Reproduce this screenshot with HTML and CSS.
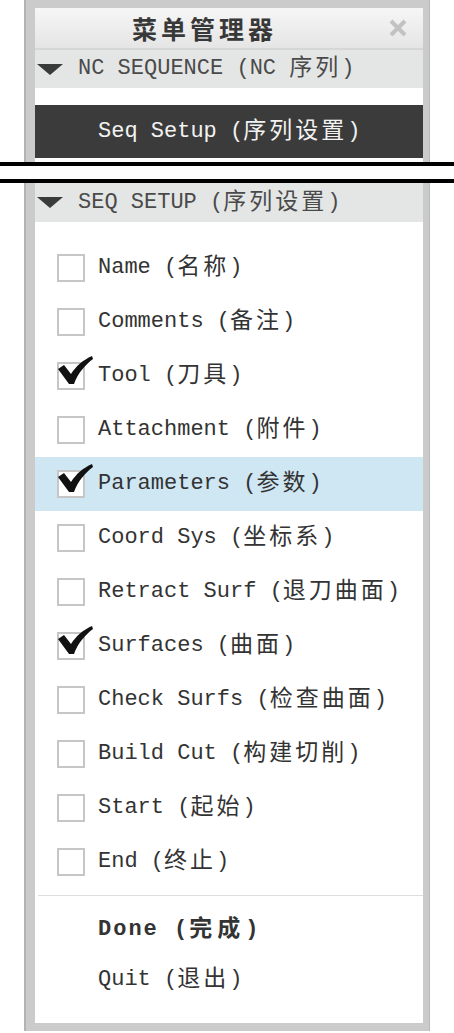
FILE: index.html
```html
<!DOCTYPE html>
<html lang="zh-CN">
<head>
    <meta charset="UTF-8">
    <title>菜单管理器</title>
    <link rel="stylesheet" href="styles.css">
</head>
<body>
    <div class="menu top">
        <div class="titlebar">
            <span class="title">菜单管理器</span>
            <span class="close">
                <svg width="20" height="18" viewBox="0 0 20 18"><path d="M3 2 L17 16 M17 2 L3 16" stroke="#c2c2c2" stroke-width="4"/></svg>
            </span>
        </div>
        <div class="groupHead"><span class="tri"></span>NC SEQUENCE (NC <span class="cn">序列</span>)</div>
        <div class="pane">
            <div class="item current">Seq Setup (<span class="cn">序列设置</span>)</div>
        </div>
    </div>

    <div class="cut"></div>

    <div class="menu bottom">
        <div class="groupHead"><span class="tri"></span>SEQ SETUP (<span class="cn">序列设置</span>)</div>
        <div class="pane list">
            <div class="checkRow"><span class="box"></span>Name (<span class="cn">名称</span>)</div>
            <div class="checkRow"><span class="box"></span>Comments (<span class="cn">备注</span>)</div>
            <div class="checkRow"><span class="box on"><svg width="40" height="34" viewBox="0 0 40 34"><path d="M1 13 L7 9 L14 18 C19 10 26 4 35 0 L36 3 C28 9 21 17 17 28 L12 28 Z" fill="#111"/></svg></span>Tool (<span class="cn">刀具</span>)</div>
            <div class="checkRow"><span class="box"></span>Attachment (<span class="cn">附件</span>)</div>
            <div class="checkRow sel"><span class="box on"><svg width="40" height="34" viewBox="0 0 40 34"><path d="M1 13 L7 9 L14 18 C19 10 26 4 35 0 L36 3 C28 9 21 17 17 28 L12 28 Z" fill="#111"/></svg></span>Parameters (<span class="cn">参数</span>)</div>
            <div class="checkRow"><span class="box"></span>Coord Sys (<span class="cn">坐标系</span>)</div>
            <div class="checkRow"><span class="box"></span>Retract Surf (<span class="cn">退刀曲面</span>)</div>
            <div class="checkRow"><span class="box on"><svg width="40" height="34" viewBox="0 0 40 34"><path d="M1 13 L7 9 L14 18 C19 10 26 4 35 0 L36 3 C28 9 21 17 17 28 L12 28 Z" fill="#111"/></svg></span>Surfaces (<span class="cn">曲面</span>)</div>
            <div class="checkRow"><span class="box"></span>Check Surfs (<span class="cn">检查曲面</span>)</div>
            <div class="checkRow"><span class="box"></span>Build Cut (<span class="cn">构建切削</span>)</div>
            <div class="checkRow"><span class="box"></span>Start (<span class="cn">起始</span>)</div>
            <div class="checkRow"><span class="box"></span>End (<span class="cn">终止</span>)</div>
            <div class="sep"></div>
            <div class="item done">Done (<span class="cn">完成</span>)</div>
            <div class="item">Quit (<span class="cn">退出</span>)</div>
        </div>
    </div>
</body>
</html>
```

FILE: styles.css
```css
body {
    margin: 0;
    background: #fff;
    font-family: "Liberation Mono", "Noto Sans CJK SC", monospace;
    font-size: 22px;
    line-height: 26px;
    color: #333;
}
.menu {
    margin-left: 24px;
    width: 406px;
    box-sizing: border-box;
    background: #cbcbcb;
    border-left: 2px solid #b3b3b3;
    border-right: 1px solid #b8b8b8;
    padding: 0 6px 0 9px;
}
.menu.top {
    padding-top: 8px;
}
.menu.bottom {
    padding-bottom: 8px;
}
.titlebar {
    height: 40px;
    display: flex;
    align-items: center;
    background: linear-gradient(#f6f6f6, #e5e5e5);
    border-bottom: 2px solid #d6d6d6;
}
.title {
    flex: 1;
    text-align: center;
    padding-right: 14px;
    font-family: "Noto Sans CJK SC", sans-serif;
    font-weight: bold;
    font-size: 25px;
    letter-spacing: 4px;
    color: #383838;
}
.close {
    width: 20px;
    height: 18px;
    margin-right: 15px;
    display: flex;
}
.groupHead {
    height: 38px;
    display: flex;
    align-items: center;
    background: #e4e6e6;
    color: #4a4a4a;
    white-space: pre;
}
.bottom .groupHead {
    height: 39px;
}
.tri {
    width: 0;
    height: 0;
    margin: 0 15px 0 2px;
    border-left: 13px solid transparent;
    border-right: 13px solid transparent;
    border-top: 11px solid #3a3a3a;
}
.cn {
    font-size: 23px;
    letter-spacing: 3px;
}
.pane {
    background: #fff;
    padding: 17px 0 4px;
}
.pane.list {
    padding: 19px 0 18px;
}
.item {
    height: 50px;
    display: flex;
    align-items: center;
    padding-left: 63px;
    white-space: pre;
}
.item.current {
    height: 53px;
    background: #3b3b3b;
    color: #f2f2f2;
}
.item.done {
    font-weight: bold;
    letter-spacing: 2px;
}
.item.done .cn {
    letter-spacing: 5px;
}
.checkRow {
    height: 54px;
    display: flex;
    align-items: center;
    padding-left: 22px;
    white-space: pre;
}
.checkRow.sel {
    background: #cfe7f3;
}
.box {
    flex: none;
    width: 28px;
    height: 28px;
    box-sizing: border-box;
    border: 2px solid #c6c6c6;
    background: #fff;
    margin-right: 13px;
    position: relative;
}
.box svg {
    position: absolute;
    left: -2px;
    top: -8px;
}
.sep {
    height: 1px;
    background: #dedede;
    margin: 6px 0 9px 3px;
}
.cut {
    height: 13px;
    background: #fff;
    border-top: 4px solid #000;
    border-bottom: 4px solid #000;
}
```
